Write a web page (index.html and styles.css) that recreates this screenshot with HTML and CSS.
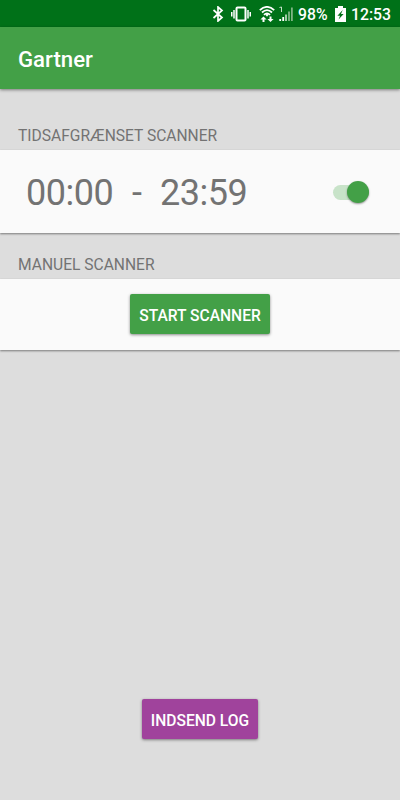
FILE: index.html
```html
<!DOCTYPE html>
<html lang="da">
<head>
    <meta charset="UTF-8">
    <meta name="viewport" content="width=device-width, initial-scale=1.0">
    <title>Gartner</title>
    <link rel="stylesheet" href="styles.css">
</head>
<body>

    <div class="status-bar">
        <svg class="icon-bluetooth" width="12" height="16" viewBox="0 0 12 16">
            <path d="M1.5 4 L10 11.5 L6 15 V1 L10 4.5 L1.5 12" fill="none" stroke="#fff" stroke-width="1.7"/>
        </svg>
        <svg class="icon-vibrate" width="20" height="16" viewBox="0 0 20 16">
            <rect x="5.5" y="1.5" width="9" height="13" rx="1" fill="none" stroke="#fff" stroke-width="2"/>
            <path d="M.75 6v4.5M3 4v8.5M17 4v8.5M19.25 6v4.5" stroke="#fff" stroke-width="1.5"/>
        </svg>
        <svg class="icon-wifi" width="16" height="17" viewBox="0 0 16 17">
            <path d="M.8 4.2Q8-2.4 15.2 4.2M3 6.5Q8 1.8 13 6.5M5 8.8Q8 5.8 11 8.8" fill="none" stroke="#fff" stroke-width="1.8"/>
            <path d="M6.3 8.8L8 7.6L9.7 8.8L8 10.8Z" fill="#fff"/>
            <path d="M1.4 13.6L4.5 10.6L7.6 13.6H5.5V16H3.5V13.6ZM8.4 13L11.5 16L14.6 13H12.5V10.6H10.5V13Z" fill="#fff"/>
        </svg>
        <svg class="icon-signal" width="14" height="16" viewBox="0 0 14 16">
            <path d="M.5 1.5L2.5 1V6" fill="none" stroke="#c5e0c8" stroke-width="1"/>
            <path d="M1.2 13v2M4.2 11v4" stroke="#fff" stroke-width="1.8"/>
            <path d="M7 8.5V15" stroke="#b5d6b9" stroke-width="1.8"/>
            <path d="M10 5.5V15M12.9 1.5V15" stroke="#7fb585" stroke-width="1.8"/>
        </svg>
        <span class="battery-level">98%</span>
        <svg class="icon-battery" width="11" height="17" viewBox="0 0 11 17">
            <path d="M3 0H8V2H11V16H0V2H3Z" fill="#fff"/>
            <path d="M7.7 4L2.4 9.7H5L3.6 13.5L8.6 7.9H6Z" fill="#007118"/>
        </svg>
        <span class="clock">12:53</span>
    </div>

    <header class="toolbar">
        <h1>Gartner</h1>
    </header>

    <main>
        <section class="scanner-section">
            <h2>TIDSAFGRÆNSET SCANNER</h2>
            <div class="panel panel-time">
                <div class="time-range">
                    <span>00:00</span>
                    <span>-</span>
                    <span>23:59</span>
                </div>
                <div class="switch">
                    <div class="switch-thumb"></div>
                </div>
            </div>
        </section>

        <section class="scanner-section">
            <h2>MANUEL SCANNER</h2>
            <div class="panel panel-manual">
                <button class="btn btn-start">START SCANNER</button>
            </div>
        </section>
    </main>

    <footer>
        <button class="btn btn-log">INDSEND LOG</button>
    </footer>

</body>
</html>
```
FILE: styles.css
```css
* {
    box-sizing: border-box;
}

body {
    margin: 0;
    height: 800px;
    display: flex;
    flex-direction: column;
    background-color: #dddddd;
    color: #737373;
    font-family: Roboto, sans-serif;
    overflow: hidden;
}

/* --- STATUS BAR --- */
.status-bar {
    height: 27px;
    flex-shrink: 0;
    display: flex;
    justify-content: flex-end;
    align-items: center;
    padding: 1px 9px 0 0;
    background-color: #007118;
    color: #fff;
    font-size: 15.75px;
    font-weight: 500;
    line-height: 26px;
}

.status-bar span {
    padding-top: 1px;
}

.icon-bluetooth {
    margin-right: 7px;
}

.icon-vibrate {
    margin-right: 8px;
}

.icon-wifi {
    margin-right: 4px;
}

.icon-signal {
    margin-right: 5px;
}

.battery-level {
    width: 30px;
    margin-right: 7px;
}

.clock {
    width: 40px;
    margin-left: 5px;
}

/* --- TOOLBAR --- */
.toolbar {
    height: 62px;
    flex-shrink: 0;
    padding-left: 18px;
    background-color: #43a047;
    box-shadow: 0 1px 3px rgba(0, 0, 0, 0.45);
}

.toolbar h1 {
    margin: 0;
    color: #fff;
    font-size: 22.2px;
    font-weight: 500;
    line-height: 64px;
}

/* --- SECTIONS --- */
main {
    padding-top: 16px;
}

.scanner-section h2 {
    height: 45px;
    margin: 0;
    padding: 21px 0 0 18px;
    font-size: 15.6px;
    font-weight: 400;
    line-height: 20px;
}

.panel {
    display: flex;
    background-color: #fafafa;
    box-shadow: 0 1px 2px rgba(0, 0, 0, 0.45);
}

.panel-time {
    height: 83px;
    margin-bottom: 1px;
    justify-content: space-between;
    align-items: center;
    padding: 1px 31px 0 26px;
}

.time-range {
    display: flex;
    gap: 18.5px;
    padding-top: 2px;
    font-size: 36px;
    letter-spacing: -0.45px;
    line-height: 42px;
}

.switch {
    width: 36px;
    height: 15px;
    display: flex;
    justify-content: flex-end;
    align-items: center;
    border-radius: 8px;
    background-color: #c8e3c9;
}

.switch-thumb {
    width: 22px;
    height: 22px;
    flex-shrink: 0;
    border-radius: 50%;
    background-color: #43a047;
    box-shadow: 0 1px 2px rgba(0, 0, 0, 0.4);
}

.panel-manual {
    height: 71px;
    justify-content: center;
    align-items: center;
    padding-bottom: 1px;
}

/* --- BUTTONS --- */
.btn {
    height: 40px;
    padding: 3px 0 0;
    border: none;
    border-radius: 2px;
    color: #fff;
    font-family: inherit;
    font-size: 15.6px;
    font-weight: 500;
    box-shadow: 0 1px 3px rgba(0, 0, 0, 0.45);
}

.btn-start {
    width: 140px;
    background-color: #43a047;
}

.btn-log {
    width: 116px;
    background-color: #a0439c;
}

footer {
    margin-top: auto;
    padding-bottom: 61px;
    text-align: center;
}
```
